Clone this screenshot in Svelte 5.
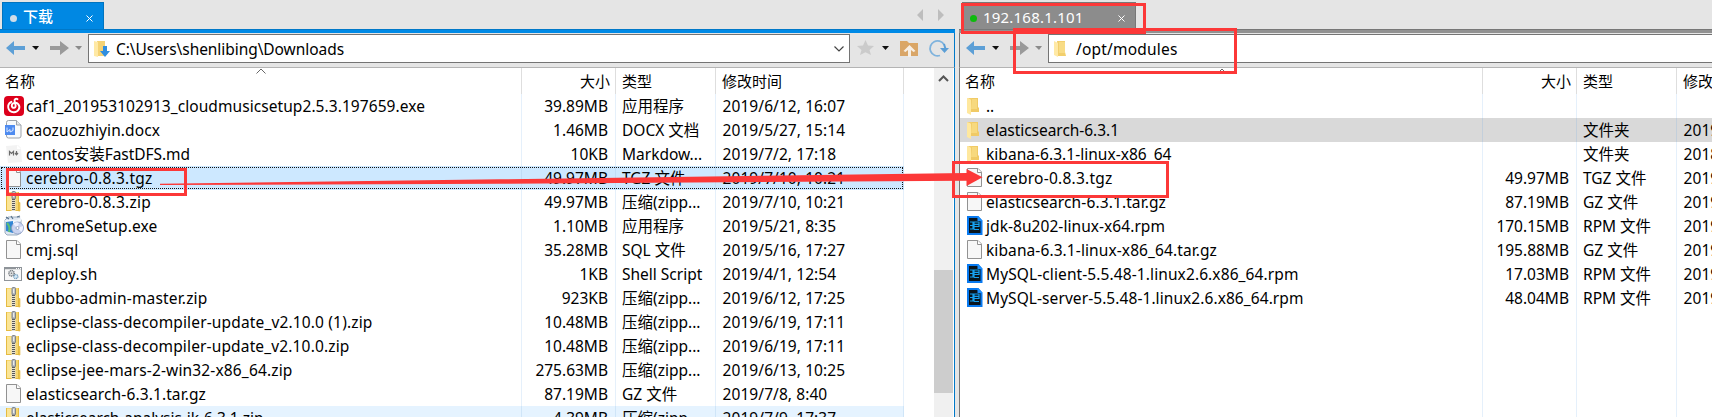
<script>
  // Stretches or tightens a label so that it takes the given width.
  function fit(node, width) {
    if (!width) return;
    const natural = node.getBoundingClientRect().width;
    node.style.letterSpacing = (width - natural) / node.textContent.length + 'px';
  }

  const local = [
    ['music', 'caf1_201953102913_cloudmusicsetup2.5.3.197659.exe', 399, '39.89MB', '应用程序', '2019/6/12, 16:07'],
    ['word', 'caozuozhiyin.docx', 134, '1.46MB', 'DOCX 文档', '2019/5/27, 15:14'],
    ['md', 'centos安装FastDFS.md', 164, '10KB', 'Markdow...', '2019/7/2, 17:18'],
    ['file', 'cerebro-0.8.3.tgz', 126.5, '49.97MB', 'TGZ 文件', '2019/7/10, 10:21', 'selected'],
    ['zip', 'cerebro-0.8.3.zip', 125, '49.97MB', '压缩(zipp...', '2019/7/10, 10:21'],
    ['setup', 'ChromeSetup.exe', 131.5, '1.10MB', '应用程序', '2019/5/21, 8:35'],
    ['file', 'cmj.sql', 52.5, '35.28MB', 'SQL 文件', '2019/5/16, 17:27'],
    ['shell', 'deploy.sh', 71.5, '1KB', 'Shell Script', '2019/4/1, 12:54'],
    ['zip', 'dubbo-admin-master.zip', 181.5, '923KB', '压缩(zipp...', '2019/6/12, 17:25'],
    ['zip', 'eclipse-class-decompiler-update_v2.10.0 (1).zip', 346.5, '10.48MB', '压缩(zipp...', '2019/6/19, 17:11'],
    ['zip', 'eclipse-class-decompiler-update_v2.10.0.zip', 323.5, '10.48MB', '压缩(zipp...', '2019/6/19, 17:11'],
    ['zip', 'eclipse-jee-mars-2-win32-x86_64.zip', 266.5, '275.63MB', '压缩(zipp...', '2019/6/13, 10:25'],
    ['file', 'elasticsearch-6.3.1.tar.gz', 180, '87.19MB', 'GZ 文件', '2019/7/8, 8:40'],
    ['zip', 'elasticsearch-analysis-ik-6.3.1.zip', 237.5, '4.39MB', '压缩(zipp...', '2019/7/9, 17:37', 'hover']
  ];
  const remote = [
    ['folder', '..', 8, '', '', ''],
    ['folder', 'elasticsearch-6.3.1', 133, '', '文件夹', '2019/7/10, 9:52', 'inactive'],
    ['folder', 'kibana-6.3.1-linux-x86_64', 185.5, '', '文件夹', '2018/7/10, 9:52'],
    ['file', 'cerebro-0.8.3.tgz', 126.5, '49.97MB', 'TGZ 文件', '2019/7/10, 9:52'],
    ['file', 'elasticsearch-6.3.1.tar.gz', 180, '87.19MB', 'GZ 文件', '2019/7/10, 9:52'],
    ['rpm', 'jdk-8u202-linux-x64.rpm', 179, '170.15MB', 'RPM 文件', '2019/7/10, 9:52'],
    ['file', 'kibana-6.3.1-linux-x86_64.tar.gz', 231, '195.88MB', 'GZ 文件', '2019/7/10, 9:52'],
    ['rpm', 'MySQL-client-5.5.48-1.linux2.6.x86_64.rpm', 312.5, '17.03MB', 'RPM 文件', '2019/7/10, 9:52'],
    ['rpm', 'MySQL-server-5.5.48-1.linux2.6.x86_64.rpm', 317.5, '48.04MB', 'RPM 文件', '2019/7/10, 9:52']
  ];
  const panes = [
    { id: 'local', tab: '下载', tabWidth: 30, path: 'C:\\Users\\shenlibing\\Downloads', pathWidth: 228, rows: local },
    { id: 'remote', tab: '192.168.1.101', tabWidth: 100.5, path: '/opt/modules', pathWidth: 101.5, rows: remote }
  ];
</script>

{#snippet icon(kind)}
  <svg class="icon" width="22" height="24" viewBox="0 0 22 24">
    {#if kind === 'music'}
      <rect x="1" y="2" width="20" height="20" rx="4" fill="#dd001b" />
      <path d="M14.500 5.200c-1.800-.9-3.300 0-2.900 1.700l1 4.600c.6 2.900-3.700 3.100-3.800.4-.1-3.300 4.600-4.200 6.600-1.600 2.500 3.400-.2 8-4.600 7.900C4.400 18 3.400 10.300 8.300 7.800" fill="none" stroke="#fff" stroke-width="1.900" stroke-linecap="round" />
    {:else if kind === 'word'}
      <path d="M3.500 4.500q0-2 2-2h8l4.500 4.500v11q0 2-2 2h-10.500q-2 0-2-2z" fill="#f8fafc" stroke="#9da3ab" />
      <path d="M13.500 2.500v4.500h4.500" fill="#e4e7eb" stroke="#9da3ab" />
      <rect x="2" y="7" width="10" height="10" fill="#4e8bf0" />
      <path d="M4 9.500v4.500l3-2.500v2.500l3-1.500v-3" fill="none" stroke="#dce8ff" stroke-width="1" />
    {:else if kind === 'md'}
      <path d="M3 4l12-1 3 3 1 14-14 1z" fill="#f3f3f3" />
      <path d="M14 3v4h4z" fill="#fff" />
      <path d="M6.500 13.500v-4l2 2 2-2v4M13.500 9v4M12 11l1.500 1.800L15 11" fill="none" stroke="#6b6b6b" stroke-width="1.200" />
    {:else if kind === 'file'}
      <path d="M3.500 2.500h10.500l3.500 3.500v14.500h-14z" fill="#f7f7f7" stroke="#929292" />
      <path d="M13.500 2.500v4h4" fill="#fff" stroke="#929292" />
    {:else if kind === 'zip'}
      <rect x="3" y="2" width="13" height="19" fill="#f6d66d" />
      <rect x="4" y="3" width="5" height="17" fill="#fbe596" />
      <path d="M3 2v19h13V2h-1v18H4V2z" fill="#e5bb42" />
      <path d="M15.500 12.500h1.500v8.500h-1.500z" fill="#efc94f" stroke="#dfb43a" stroke-width=".6" />
      <rect x="8.500" y="2" width="4" height="19" fill="#e7e2d0" />
      <path d="M10.500 9v12" stroke="#595959" stroke-width="3" stroke-dasharray="1 1" />
      <rect x="9" y="1.500" width="3.500" height="7.500" rx="1" fill="#b9bdc1" stroke="#6d7277" stroke-width=".8" />
      <path d="M10.700 3v4" stroke="#f5f5f5" />
    {:else if kind === 'setup'}
      <path d="M2 6l3-3h11l2 3v13l-4 2H4l-2-2z" fill="#dfe8f3" stroke="#8499ae" stroke-width=".8" />
      <path d="M2 6h12l4-3v4l-4 3H3z" fill="#eff4fa" />
      <path d="M3 3l3 2M8 2l2 3M14 3l3-1" stroke="#56718c" stroke-width="1.200" />
      <path d="M3 8l7-1v12l-7-2z" fill="#3186d5" />
      <path d="M4 9c3 3 3 6 2 9" stroke="#60bf70" stroke-width="2" fill="none" />
      <circle cx="14.500" cy="14" r="6" fill="#c9d3ef" stroke="#899bc2" stroke-width=".8" />
      <path d="M14.500 14L10 10q3-3 6-1zM14.500 14l4 4q2-3 1.500-6z" fill="#edf0ff" />
      <circle cx="14.500" cy="14" r="1.500" fill="#fff" stroke="#7d8dac" stroke-width=".7" />
    {:else if kind === 'shell'}
      <rect x="1.500" y="5.500" width="17" height="13" fill="#f8f8f8" stroke="#8f9499" />
      <path d="M1.500 6.500h17" stroke="#8f9499" stroke-width="1.500" />
      <path d="M13 6.500h5" stroke="#fff" stroke-dasharray="1 1" />
      <circle cx="8.500" cy="11.300" r="2.700" fill="#e3e5e6" stroke="#73797e" stroke-width="1.500" stroke-dasharray="1.200 .6" />
      <circle cx="8.500" cy="11.300" r=".8" fill="#777" />
      <circle cx="12.800" cy="14.500" r="2" fill="#d9eaf6" stroke="#6e9bbd" stroke-width="1.400" stroke-dasharray="1 .6" />
    {:else if kind === 'folder'}
      <path d="M6 4h8v9l1 1v4H6z" fill="#f0ca66" />
      <path d="M8 5h5v10H7z" fill="#f7d97e" />
      <path d="M3 4l4 1.500V21l-4-2z" fill="#ffe89e" />
      <path d="M3 4h5v1.500H7z" fill="#f4ce6a" />
    {:else if kind === 'rpm'}
      <path d="M4 3h10l3.500 4v13H4z" fill="#08151e" stroke="#0879ef" stroke-width="2" />
      <path d="M13.500 2v5h5z" fill="#1c90ff" />
      <path d="M6 8h3v7M6 11.500h3M6 15h3M10 8h5v4.500h-5zM10 10.300h5M10 12.500v3h5" fill="none" stroke="#17a0ee" stroke-width="1.200" />
    {/if}
  </svg>
{/snippet}

{#snippet navigation()}
  <svg class="nav" width="88" height="34" viewBox="0 0 88 34">
    <path d="M6 15l8-7v5h11v4H14v5z" fill="#5c9fd6" />
    <path d="M32 13h7l-3 4z" fill="#111" />
    <path d="M50 13h10V8l9 7-9 7v-5H50z" fill="#9a9a9a" />
    <path d="M75 13h7l-3 4z" fill="#8b8b8b" />
  </svg>
{/snippet}

<div class="window">
  {#each panes as pane}
    <section class="pane {pane.id}">
      <div class="tabs">
        <div class="tab">
          <i></i><b use:fit={pane.tabWidth}>{pane.tab}</b>
          <svg class="close" width="7" height="7" viewBox="0 0 7 7"><path d="M.5 .5l6 6M6.500 .5l-6 6" stroke="#fff" /></svg>
        </div>
        {#if pane.id === 'local'}
          <svg class="scrolltabs" width="32" height="12" viewBox="0 0 32 12"><path d="M7 0v12L1 6zM22 0v12l6-6z" fill="#bdbdbd" /></svg>
        {/if}
      </div>
      <div class="accent"></div>
      <div class="toolbar">
        {@render navigation()}
        <div class="address">
          {#if pane.id === 'local'}
            <svg width="18" height="18" viewBox="0 0 18 18">
              <path d="M4 1h8v15H4z" fill="#f5d376" /><path d="M1 1l4 1v15l-4-1z" fill="#ffe9a5" />
              <path d="M10 6h4v5h3l-5 6-5-6h3z" fill="#2f8ee0" />
            </svg>
          {:else}
            <svg width="18" height="18" viewBox="0 0 18 18">
              <path d="M4 1h8v11l1 4H5z" fill="#f2cf6d" /><path d="M6 2h6v11H6z" fill="#f8dc86" /><path d="M1 1l4 2v14l-4-2z" fill="#ffe9a5" />
            </svg>
          {/if}
          <span use:fit={pane.pathWidth}>{pane.path}</span>
          {#if pane.id === 'local'}
            <svg class="chevron" width="10" height="6" viewBox="0 0 10 6"><path d="M.5 .5L5 5 9.500 .5" fill="none" stroke="#444" stroke-width="1.200" /></svg>
          {/if}
        </div>
        {#if pane.id === 'local'}
          <svg class="tools" width="104" height="34" viewBox="0 0 104 34">
            <path d="M15.500 7l2.500 5.500 6 .5-4.500 4 1.500 5-5.500-2.700-5.500 2.700 1.500-5-4.500-4 6-.5z" fill="#cbcbcb" />
            <path d="M32 13h7l-3.500 4z" fill="#111" />
            <path d="M50 8h7l2 2h9v13H50z" fill="#dba665" /><path d="M50 12h18v11H50z" fill="#d9a668" /><path d="M59.500 12l6 6-2 1-2.500-2v7h-3v-7l-2.500 2-2-1z" fill="#f7efe5" />
            <path d="M94 11.500A7.500 7.500 0 1 0 90 22.500" fill="none" stroke="#7fb3dd" stroke-width="1.800" />
            <path d="M90 15h9l-4.500 5z" fill="#5c9fd6" /><path d="M94 11l1.500 5" stroke="#5c9fd6" stroke-width="2" />
          </svg>
        {/if}
      </div>
      <div class="content">
        <div class="table">
          <div class="row head">
            <div class="name">名称<svg class="sort" width="10" height="6" viewBox="0 0 10 6"><path d="M.5 5.500L5 1l4.500 4.500" fill="none" stroke="#666" /></svg></div>
            <div class="size">大小</div>
            <div>类型</div>
            <div>修改时间</div>
          </div>
          {#each pane.rows as [kind, name, width, size, type, date, state]}
            <div class="row {state ?? ''}">
              <div class="name">{@render icon(kind)}<span use:fit={width}>{name}</span></div>
              <div class="size">{size}</div>
              <div class="type">{type}</div>
              <div class="date">{date}</div>
            </div>
          {/each}
          <div class="row filler"><div></div><div></div><div></div><div></div></div>
        </div>
        {#if pane.id === 'local'}
          <div class="scrollbar">
            <svg width="19" height="26" viewBox="0 0 19 26"><path d="M5 13l4.500-4.500L14 13" fill="none" stroke="#555" stroke-width="2" /></svg>
            <div class="thumb"></div>
          </div>
        {/if}
      </div>
    </section>
  {/each}

  <svg class="marks" width="1712" height="417" viewBox="0 0 1712 417">
    <g fill="none" stroke="#fc3838" stroke-width="3">
      <rect x="962.500" y="4.500" width="182" height="28" />
      <rect x="1014.500" y="29.500" width="221" height="43" />
      <rect x="7.500" y="169.500" width="178" height="25" />
      <rect x="953.500" y="162.500" width="214" height="34" />
    </g>
    <path d="M160 183.800L500 179.300 966.500 173v-4l16 8.300L966.500 186v-5.300L500 183.700 160 185z" fill="#fc3838" />
  </svg>
</div>

<style>
  :global(body) { margin: 0; overflow: hidden; }
  .window { position: relative; width: 1712px; height: 417px; overflow: hidden; display: flex; background: #e5e5e5; color: #000; font: 15.5px/24px "Noto Sans", "Noto Sans CJK SC", sans-serif; white-space: pre; }
  .pane { display: flex; flex-direction: column; height: 417px; box-sizing: border-box; flex: none; }
  .local { width: 955px; margin-right: 4px; }
  .remote { width: 753px; }
  .tabs { height: 29px; flex: none; display: flex; align-items: flex-end; justify-content: space-between; }
  .tab { box-sizing: border-box; height: 27px; width: 102px; margin-left: 2px; padding: 0 10px 0 7px; background: #0088e3; border: 1px solid #0074bf; border-bottom: 0; display: flex; align-items: center; color: #fff; font-size: 15px; }
  .tab i { width: 7px; height: 7px; border-radius: 50%; background: #cfdde8; margin: 4px 6px 0 0; }
  .tab b { font-weight: 500; font-family: "Noto Sans CJK SC", sans-serif; }
  .close { margin: 4px 0 0 auto; }
  .remote .tab { width: 174px; margin-left: 3px; background: #8c8c8c; border-color: #777; }
  .remote .tab i { background: #0dbb0d; margin-right: 6px; }
  .remote .tab b { margin-top: 2px; font-weight: 400; font-family: "Noto Sans", sans-serif; }
  .scrolltabs { margin: 0 7px 8px 0; }
  .accent { height: 4px; box-sizing: border-box; flex: none; background: #008ae6; border-top: 1px solid #0078c8; }
  .remote .accent { background: #919191; border-color: #777; }
  .toolbar { height: 34px; flex: none; display: flex; border-right: 1px solid #0078c8; }
  .remote .toolbar, .remote .content { border-right: 0; border-left: 1px solid #777; }
  .nav { flex: none; }
  .address { box-sizing: border-box; height: 29px; width: 762px; margin-top: 1px; border: 1px solid #747474; background: #fff; display: flex; align-items: center; padding: 0 5px 0 4px; flex: none; }
  .local .address span { margin-left: 5px; }
  .remote .address span { margin-left: 5px; }
  .chevron { margin-left: auto; }
  .content { flex: 1; min-height: 0; box-sizing: border-box; display: flex; border-top: 1px solid #b4b4b4; border-right: 1px solid #0078c8; background: #fff; }
  .table { width: 904px; flex: none; display: flex; flex-direction: column; overflow: hidden; }
  .remote .table { width: 752px; }
  .row { height: 24px; flex: none; display: grid; grid-template-columns: 522px 94px 100px 188px; }
  .remote .row { grid-template-columns: 523px 94px 100px 188px; }
  .row > div { box-sizing: border-box; border-right: 1px solid #e5f0fb; padding-left: 6px; overflow: hidden; }
  .row .name { position: relative; display: flex; padding-left: 3px; }
  .row .name span { margin-left: 1px; }
  .remote .row .name span { margin-left: 0; }
  .row .size { text-align: right; padding-right: 7px; }
  .row .date { letter-spacing: .08px; padding-left: 6.500px; }
  .icon { flex: none; }
  .remote .icon { margin-left: 1px; }
  .row.head { height: 26px; line-height: 27px; font-size: 15px; }
  .row.head > div { border-color: #dedede; }
  .row.head .name { padding-left: 5px; }
  .row.head .size { padding-right: 5px; }
  .sort { position: absolute; left: 256px; top: 0; }
  .remote .sort { left: 257px; }
  .filler { flex: 1; height: auto; }
  .selected { background: #cde8ff; outline: 1px dotted #111; outline-offset: -2px; }
  .selected > div { border-color: #bfdcf6; }
  .hover { background: #e5f3ff; }
  .hover > div { border-color: #cfe5f8; }
  .inactive { background: #d9d9d9; }
  .inactive > div { border-color: #c3cfdb; }
  .scrollbar { width: 19px; margin-left: 30px; background: #f0f0f0; display: flex; flex-direction: column; }
  .thumb { height: 123px; margin-top: 176px; background: #cdcdcd; }
  .marks { position: absolute; left: 0; top: 0; pointer-events: none; }
</style>
